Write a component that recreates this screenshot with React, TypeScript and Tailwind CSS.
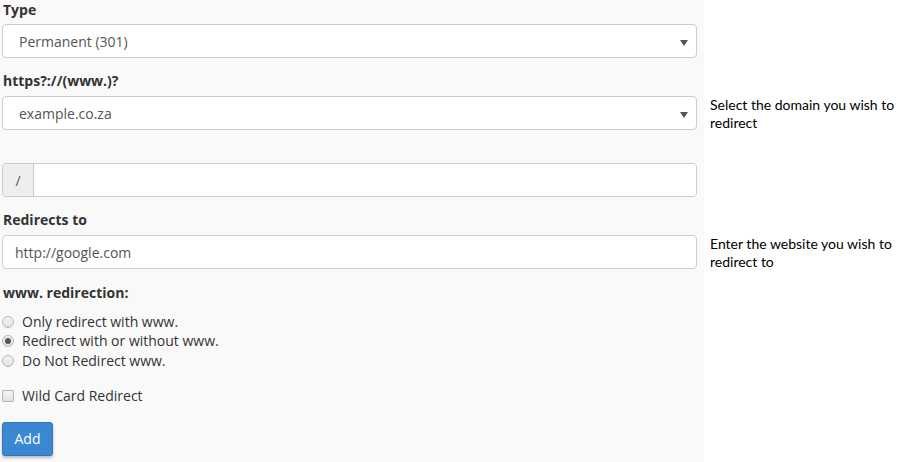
import React, { useState } from 'react';

const Caret = () => (
    <svg width="8" height="6" viewBox="0 0 8 6" className="absolute right-[8px] top-[15px]">
        <path d="M0 0 H8 L4 6 Z" fill="#555" />
    </svg>
);

const Radio = ({ checked }: { checked: boolean }) => (
    <span className="w-[12px] h-[12px] rounded-full border border-[#b5b5b5] bg-gradient-to-b from-[#f4f4f4] to-[#e2e2e2] flex items-center justify-center shrink-0">
        {checked && <span className="w-[6px] h-[6px] rounded-full bg-[#555]" />}
    </span>
);

const OPTIONS = ['Only redirect with www.', 'Redirect with or without www.', 'Do Not Redirect www.'];

export default function App() {
    const [choice, setChoice] = useState(1);

    return (
        <div className="flex w-[901px] h-[462px] bg-white text-[14px] text-[#333]" style={{ fontFamily: '"Open Sans", sans-serif' }}>
            <div className="w-[704px] bg-[#f9f9f9] pl-[2px] pr-[7px] flex flex-col">
                <label className="block font-bold leading-[20px] mt-[0px] mb-[4px] pl-[1px]">Type</label>
                <div className="relative h-[34px] bg-white border border-[#ccc] rounded-[4px] flex items-center pl-[16px] text-[#555]">
                    Permanent (301)
                    <Caret />
                </div>

                <label className="block font-bold leading-[20px] mt-[13px] mb-[5px] pl-[1px]">https?://(www.)?</label>
                <div className="relative h-[34px] bg-white border border-[#ccc] rounded-[4px] flex items-center pl-[16px] text-[#555]">
                    example.co.za
                    <Caret />
                </div>

                <div className="mt-[33px] h-[34px] flex border border-[#ccc] rounded-[4px] overflow-hidden">
                    <span className="w-[31px] bg-[#eee] border-r border-[#ccc] flex items-center justify-center text-[#555]">/</span>
                    <span className="flex-1 bg-white" />
                </div>

                <label className="block font-bold leading-[20px] mt-[13px] mb-[5px] pl-[1px]">Redirects to</label>
                <div className="h-[34px] bg-white border border-[#ccc] rounded-[4px] flex items-center pl-[12px] text-[#555]">
                    http://google.com
                </div>

                <label className="block font-bold leading-[20px] mt-[14px] pl-[1px]">www. redirection:</label>
                <div className="mt-[9px] flex flex-col">
                    {OPTIONS.map((opt, i) => (
                        <div key={opt} onClick={() => setChoice(i)} className="flex items-center gap-[8px] h-[19.5px] leading-[20px] cursor-pointer">
                            <Radio checked={choice === i} />
                            <span>{opt}</span>
                        </div>
                    ))}
                </div>

                <div className="mt-[15px] flex items-center gap-[8px] h-[20px]">
                    <span className="w-[12px] h-[12px] rounded-[2px] border border-[#b5b5b5] bg-gradient-to-b from-[#f4f4f4] to-[#e2e2e2] shrink-0" />
                    <span>Wild Card Redirect</span>
                </div>

                <button className="mt-[16px] w-[51px] h-[34px] bg-[#3a88d2] border border-[#2f75b8] rounded-[3px] text-white shadow-[0_2px_3px_rgba(0,0,0,0.25)]">
                    Add
                </button>
            </div>

            <div className="flex-1 pl-[6px] text-[14px] leading-[18px] text-black" style={{ fontFamily: 'Lato, sans-serif' }}>
                <p className="mt-[96px]">Select the domain you wish to redirect</p>
                <p className="mt-[103px]">Enter the website you wish to redirect to</p>
            </div>
        </div>
    );
}
